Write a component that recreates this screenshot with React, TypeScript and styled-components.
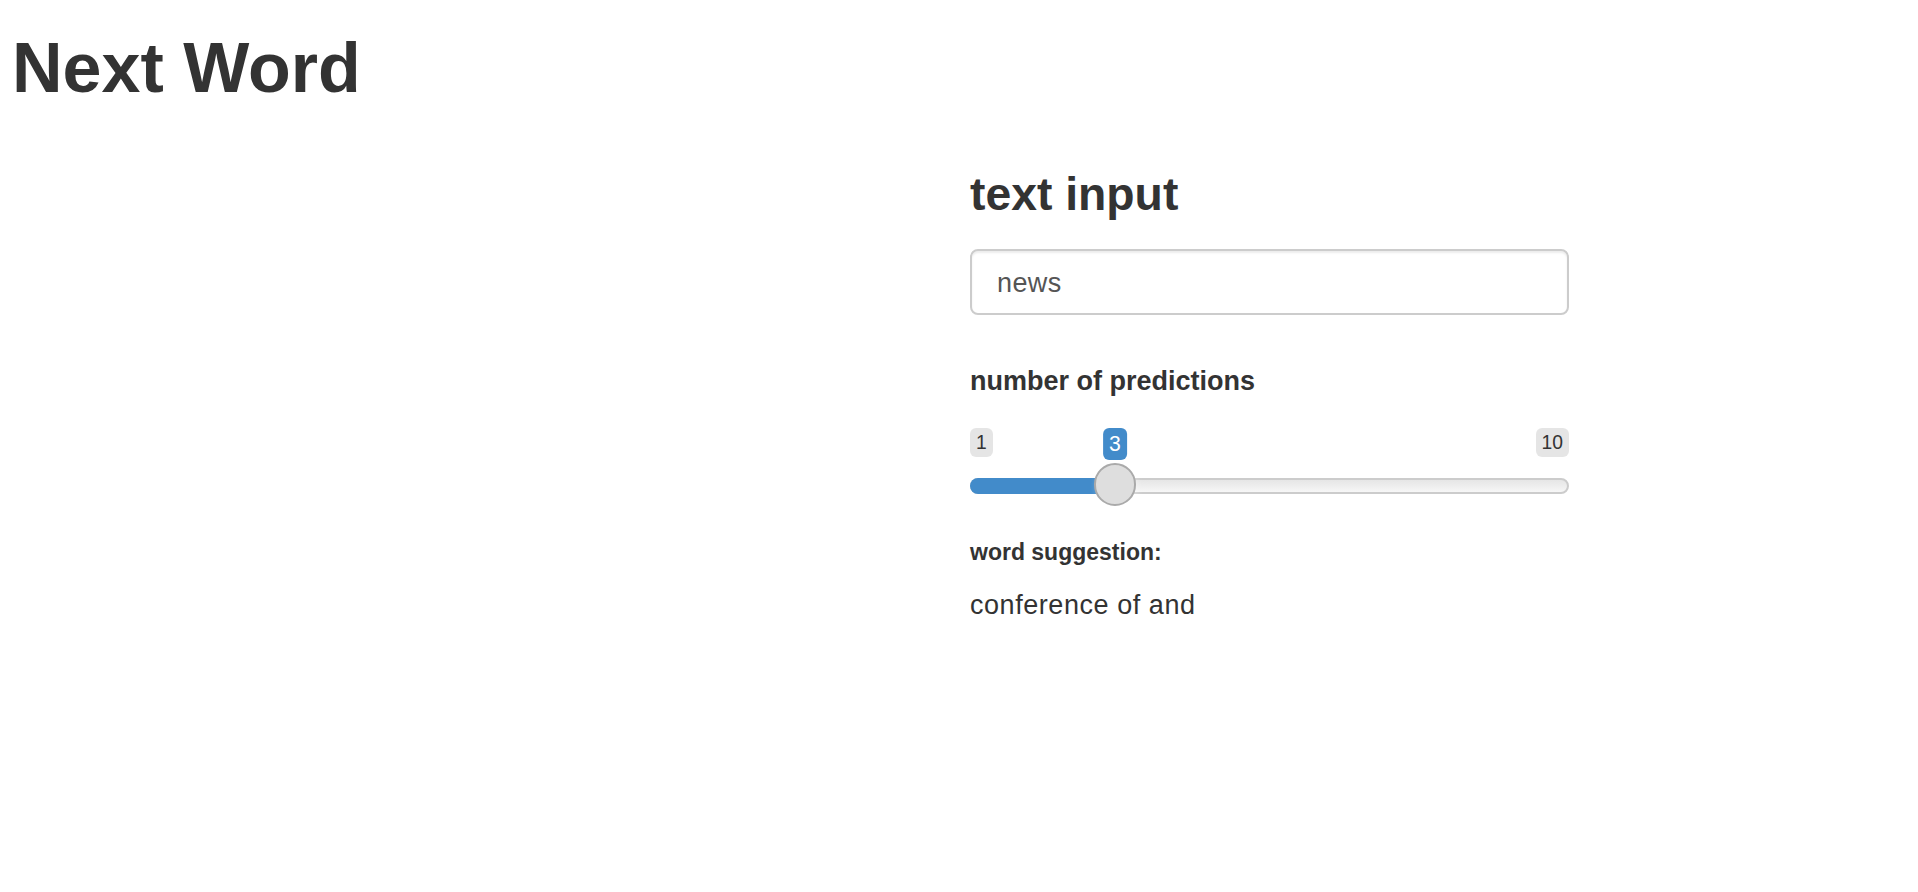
import styled, { createGlobalStyle } from "styled-components";

// everything is bootstrap 3 sizes blown up ~1.93x
const GlobalStyle = createGlobalStyle`
  html, body {
    margin: 0;
    padding: 0;
    background: #fff;
  }
  body {
    font-family: "Liberation Sans", Arial, sans-serif;
    color: #333;
  }
`;

const Page = styled.div`
  padding: 30px 8px 40px 8px;
`;

const Title = styled.h1`
  margin: 0 0 0 4px;
  font-size: 70px;
  line-height: 1.1;
  font-weight: 700;
  color: #333;
`;

const Row = styled.div`
  display: flex;
  margin-top: 62px;
`;

const Sidebar = styled.div`
  width: 962px;
  flex: none;
`;

const Main = styled.div`
  width: 599px;
  display: flex;
  flex-direction: column;
`;

const Heading = styled.h3`
  margin: 0 0 28.6px 0;
  font-size: 46.3px;
  line-height: 1.1;
  font-weight: 700;
`;

const TextInput = styled.input`
  box-sizing: border-box;
  width: 100%;
  height: 66px;
  padding: 4px 25px 0 25px;
  font-family: "Liberation Sans", Arial, sans-serif;
  font-size: 27px;
  letter-spacing: 0.4px;
  color: #555;
  background: #fff;
  border: 2px solid #ccc;
  border-radius: 8px;
  box-shadow: inset 0 2px 2px rgba(0, 0, 0, 0.075);
  outline: none;
`;

const Label = styled.label`
  display: block;
  margin: 47.4px 0 27px 0;
  font-size: 27px;
  line-height: 38.6px;
  font-weight: 700;
`;

const SliderWrap = styled.div`
  position: relative;
  height: 80px;
`;

const Tag = styled.span<{ $active?: boolean }>`
  position: absolute;
  top: 0;
  padding: 2px 6px;
  border-radius: 6px;
  font-size: ${(p) => (p.$active ? "21.2px" : "19.3px")};
  line-height: 1.333;
  color: ${(p) => (p.$active ? "#fff" : "#333")};
  background: ${(p) => (p.$active ? "#428bca" : "rgba(0, 0, 0, 0.1)")};
  white-space: nowrap;
`;

const MinTag = styled(Tag)`
  left: 0;
`;

const MaxTag = styled(Tag)`
  right: 0;
`;

const ValueTag = styled(Tag)`
  transform: translateX(-50%);
`;

const Line = styled.div`
  position: absolute;
  top: 50.5px;
  left: 0;
  right: 0;
  height: 15.5px;
  box-sizing: border-box;
  border: 2px solid #ccc;
  border-radius: 31px;
  background: linear-gradient(to bottom, #ddd -50%, #fff 150%);
`;

const Bar = styled.div`
  position: absolute;
  top: 50.5px;
  left: 0;
  height: 15.5px;
  background: #428bca;
  border-radius: 16px 0 0 16px;
`;

const Handle = styled.div`
  position: absolute;
  top: 35.5px;
  width: 42.5px;
  height: 42.5px;
  box-sizing: border-box;
  border-radius: 50%;
  background: #dedede;
  border: 2px solid #aaa;
  box-shadow: 2px 2px 6px rgba(255, 255, 255, 0.3);
`;

const SmallHeading = styled.h6`
  margin: 32.5px 0 20.5px 0;
  font-size: 23px;
  line-height: 1.1;
  font-weight: 700;
`;

const Output = styled.div`
  font-size: 27px;
  line-height: 38.6px;
  letter-spacing: 0.55px;
`;

const WIDTH = 599;
const HANDLE = 42.5;

function RangeSlider({ min, max, value }: { min: number; max: number; value: number }) {
  const pct = (value - min) / (max - min);
  const left = pct * (WIDTH - HANDLE);
  const center = left + HANDLE / 2;
  return (
    <SliderWrap>
      <MinTag>{min}</MinTag>
      <MaxTag>{max}</MaxTag>
      <ValueTag $active style={{ left: center }}>
        {value}
      </ValueTag>
      <Line />
      <Bar style={{ width: center }} />
      <Handle style={{ left }} />
    </SliderWrap>
  );
}

export default function App() {
  return (
    <Page>
      <GlobalStyle />
      <Title>Next Word</Title>
      <Row>
        <Sidebar />
        <Main>
          <Heading>text input</Heading>
          <TextInput defaultValue="news" />
          <Label>number of predictions</Label>
          <RangeSlider min={1} max={10} value={3} />
          <SmallHeading>word suggestion:</SmallHeading>
          <Output>conference of and</Output>
        </Main>
      </Row>
    </Page>
  );
}
